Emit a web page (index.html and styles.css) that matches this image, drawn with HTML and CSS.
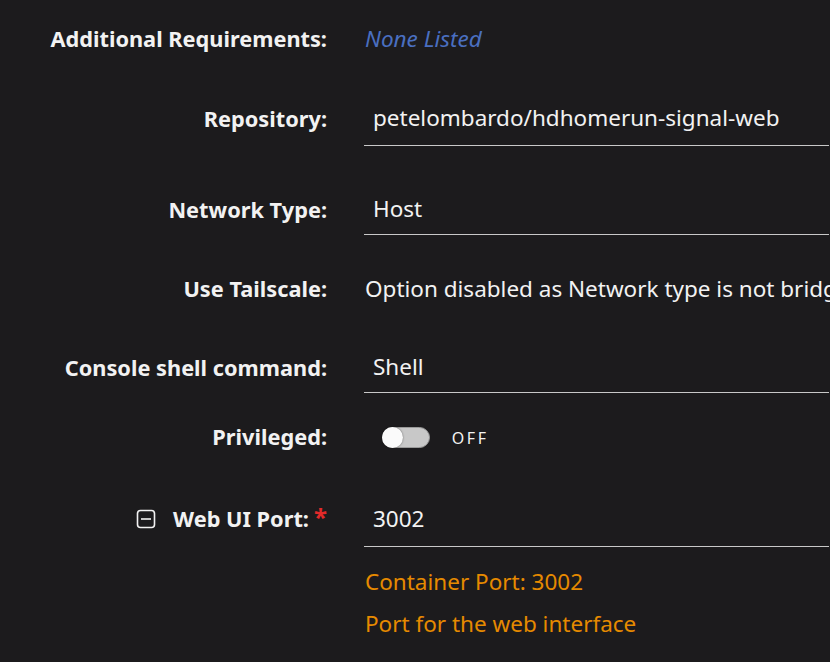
FILE: index.html
```html
<!doctype html>
<html lang="en">

<head>
  <meta charset="UTF-8" />
  <meta name="viewport" content="width=device-width, initial-scale=1.0" />
  <title>Add Container</title>
  <link rel="stylesheet" href="styles.css">
</head>

<body>
  <form class="settings">
    <div class="row">
      <label class="label">Additional Requirements:</label>
      <div class="value"><em class="none">None Listed</em></div>
    </div>

    <div class="row row-repo">
      <label class="label">Repository:</label>
      <div class="value"><input class="field" type="text" value="petelombardo/hdhomerun-signal-web"></div>
    </div>

    <div class="row">
      <label class="label">Network Type:</label>
      <div class="value"><div class="field select">Host</div></div>
    </div>

    <div class="row">
      <label class="label">Use Tailscale:</label>
      <div class="value clip">Option disabled as Network type is not bridge or custom</div>
    </div>

    <div class="row">
      <label class="label">Console shell command:</label>
      <div class="value"><div class="field select">Shell</div></div>
    </div>

    <div class="row row-toggle">
      <label class="label">Privileged:</label>
      <div class="value">
        <span class="switch"><span class="knob"></span></span>
        <span class="switch-text">OFF</span>
      </div>
    </div>

    <div class="row">
      <label class="label">
        <svg class="collapse" viewBox="0 0 20 20">
          <rect x="1.5" y="1.5" width="17" height="17" rx="3" />
          <path d="M5 10h10" />
        </svg>
        Web UI Port:<span class="required">*</span>
      </label>
      <div class="value"><input class="field" type="text" value="3002"></div>
    </div>

    <div class="row row-desc">
      <span></span>
      <div class="value desc">
        <div>Container Port: 3002</div>
        <div>Port for the web interface</div>
      </div>
    </div>
  </form>
</body>

</html>
```

FILE: styles.css
```css
:root {
  --bg-color: #1c1b1d;
  --text-color: #f2f2f2;
  --line-color: #c8c8c8;
  --link-color: #4a6fc0;
  --note-color: #e68a00;
  --required: #e22a2a;
}

* {
  margin: 0;
  padding: 0;
  box-sizing: border-box;
}

html,
body {
  background: var(--bg-color);
  overflow: hidden;
}

body {
  width: 830px;
  height: 662px;
  font-family: "Noto Sans", "Open Sans", sans-serif;
  font-size: 22.5px;
  line-height: 30px;
  color: var(--text-color);
}

.settings {
  display: flex;
  flex-direction: column;
  padding-top: 24px;
}

.row {
  display: grid;
  grid-template-columns: 327px 1fr;
  column-gap: 37px;
  align-items: center;
  margin-top: 39px;
}

.row:first-child {
  margin-top: 0;
}

.row-repo {
  margin-top: 37px;
}

.label {
  display: flex;
  align-items: center;
  justify-content: flex-end;
  font-size: 21.75px;
  font-weight: 700;
  white-space: nowrap;
}

.value {
  min-width: 0;
  white-space: nowrap;
  padding-left: 1px;
}

.clip {
  overflow: hidden;
}

.none {
  color: var(--link-color);
}

.field {
  display: block;
  width: 100%;
  border: none;
  border-bottom: 1px solid var(--line-color);
  background: transparent;
  color: var(--text-color);
  font: inherit;
  line-height: 28px;
  padding: 13px 9px 13px 9px;
  margin-left: -1px;
  outline: none;
}

.select {
  padding: 10px 9px 11px 9px;
}

.row-toggle {
  margin-top: 28px;
}

.switch {
  display: inline-block;
  vertical-align: middle;
  position: relative;
  width: 48px;
  height: 21px;
  margin-left: 17px;
  border-radius: 11px;
  background: #c8c8c8;
  border: 1px solid #9a9a9a;
}

.knob {
  position: absolute;
  left: -1px;
  top: -1px;
  width: 21px;
  height: 21px;
  border-radius: 50%;
  background: #fafafa;
  box-shadow: 0 0 2px rgba(0, 0, 0, 0.5);
}

.switch-text {
  display: inline-block;
  vertical-align: middle;
  margin-left: 16px;
  font-size: 16px;
  letter-spacing: 2.5px;
}

.collapse {
  width: 20px;
  height: 20px;
  margin-right: 17px;
  fill: none;
  stroke: var(--text-color);
  stroke-width: 1.6;
}

.required {
  color: var(--required);
  margin-left: 5px;
  align-self: flex-start;
  font-size: 24px;
  line-height: 26px;
}

.row-desc {
  margin-top: 14px;
}

.desc {
  color: var(--note-color);
  line-height: 42px;
}
```
